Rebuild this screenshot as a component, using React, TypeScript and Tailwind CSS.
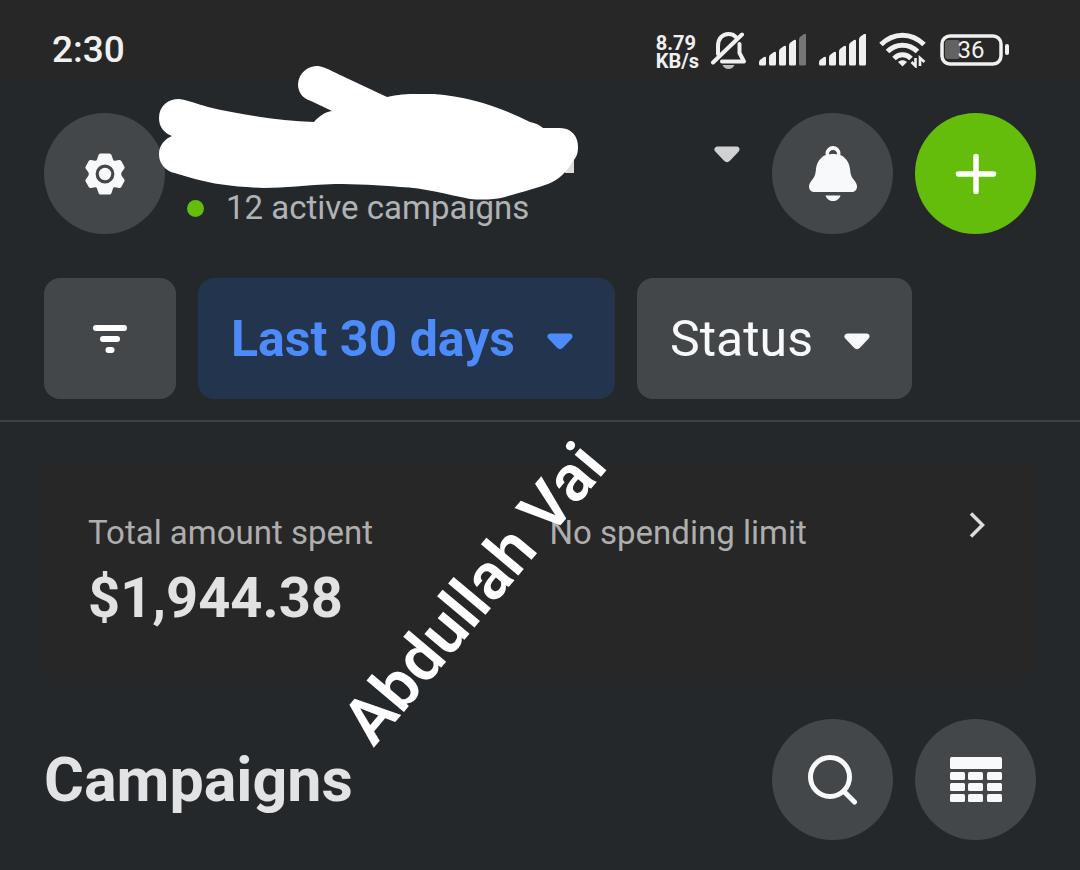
import type { ReactNode } from 'react';

function Caret() {
  return (
    <svg className="pointer-events-none mt-1 shrink-0" width="26" height="17" viewBox="0 0 26 17" fill="currentColor" stroke="currentColor" strokeWidth="6" strokeLinejoin="round" aria-hidden="true">
      <path d="M3.500 3.500h19L14 12.500q-1 1-2 0z" />
    </svg>
  );
}

function Signal({ weak = false }: { weak?: boolean }) {
  const bars = [
    { x: 0, h: 8 },
    { x: 10, h: 13 },
    { x: 20, h: 19 },
    { x: 30, h: 25 },
    { x: 40, h: 31 },
  ];
  return (
    <svg width="48" height="32" viewBox="0 0 48 32" aria-hidden="true">
      {bars.map((b, i) => (
        <path
          key={b.x}
          d={`M${b.x + 1.5} 31.500h4a1.500 1.500 0 0 0 1.500-1.500V${32 - b.h}q0-2-2-1l-3.500 2.500q-1.500 1-1.500 3V30a1.500 1.500 0 0 0 1.500 1.500z`}
          fill={weak && i === 4 ? '#767676' : '#f0f0f0'}
        />
      ))}
    </svg>
  );
}

function StatusBar() {
  return (
    <div className="flex h-20 items-center justify-between bg-[#272727] pt-5 pr-[71px] pl-[52px] text-[#f0f0f0]">
      <span className="text-[37px] font-medium">2:30</span>
      <div className="flex items-center gap-3">
        <div className="pt-1 text-[20px] leading-[18px] font-bold">
          <p>8.79</p>
          <p>KB/s</p>
        </div>
        <svg width="36" height="38" viewBox="0 0 36 38" fill="none" stroke="currentColor" strokeWidth="4" strokeLinecap="round" strokeLinejoin="round" aria-hidden="true">
          <path d="M7 23V15C7 7.500 11.500 3 17.500 3c3 0 5.500 1 7.200 2.800M28.500 13v9l4.500 8.500H11" />
          <path d="M31 3.500L2 31.500" />
          <path d="M11.500 34h12c-1.200 2.600-3.300 4-6 4s-4.800-1.400-6-4z" fill="#bdbdbd" stroke="none" />
        </svg>
        <Signal weak />
        <Signal />
        <svg width="48" height="36" viewBox="0 0 48 36" fill="none" stroke="currentColor" strokeWidth="5" aria-hidden="true">
          <path d="M2 12.500C14.500 0 32.500 0 45 12.500" />
          <path d="M8.500 19.500c8.500-8.500 21.500-8.500 30 0" />
          <path d="M15 26.500c5-5 12-5 17 0" />
          <path d="M23.500 34.500l-4.500-4.500c2.500-2.500 6.500-2.500 9 0z" fill="currentColor" stroke="none" />
          <path d="M36.500 26v8l-4-4M41 34v-8l4.500 4" strokeWidth="2.600" />
        </svg>
        <svg width="70" height="32" viewBox="0 0 70 32" aria-hidden="true">
          <rect x="6" y="6" width="15" height="19" rx="3" fill="#626262" />
          <rect x="3" y="2" width="59" height="28" rx="8" fill="none" stroke="#f0f0f0" strokeWidth="3.500" />
          <rect x="66" y="10" width="4" height="11" rx="2" fill="#f0f0f0" />
          <text x="32" y="24" textAnchor="middle" fontSize="24" fill="#f0f0f0">36</text>
        </svg>
      </div>
    </div>
  );
}

function RoundButton({ label, green = false, children }: { label: string; green?: boolean; children: ReactNode }) {
  return (
    <button
      aria-label={label}
      className={`flex size-[121px] shrink-0 items-center justify-center rounded-full text-[#f8f9fa] ${green ? 'bg-[#65bd0b]' : 'bg-[#444749]'}`}
    >
      {children}
    </button>
  );
}

function Scribble() {
  return (
    <svg className="pointer-events-none absolute top-[60px] left-[150px]" width="440" height="150" viewBox="150 60 440 150" aria-hidden="true">
      <path d="M565 155h9v18h-9z" fill="#dcdcdc" />
      <path
        fill="#fff"
        d="M159 118C159 106 168 99 179 99C187 100 198 104 208 107C242 115 280 121 314 122C319 116 325 112 332 111L311 101C302 98 298 92 298 84C299 73 307 66 318 66C325 67 332 71 338 74L387 97C402 93 418 94 434 94C470 97 500 107 530 122C535 123 540 125 543 128H560C572 128 578 137 578 147C578 154 576 158 573 161C564 176 555 182 545 185C530 190 515 194 505 197C494 200 480 200 470 199C445 194 425 188 400 187C380 185 355 184 335 184C305 185 285 188 264 188C235 187 213 184 195 179L171 172C163 168 159 162 159 154C159 145 165 139 172 136C164 133 159 127 159 118Z"
      />
    </svg>
  );
}

function Header() {
  return (
    <header className="flex px-11 pt-[33px]">
      <RoundButton label="Settings">
        <svg width="40" height="42" viewBox="0 0 40 42" aria-hidden="true">
          <path
            d="M15.500 0.500h9q1.500 0 2 1.500l1.500 4.500q.5 1.500 2 1.200l4-.7q1.500-.2 2.300 1l3 5.500q.8 1.300-.3 2.500l-2.200 3q-1.200 2 0 4l2.200 3q1 1.200.3 2.500l-3 5.500q-.8 1.200-2.300 1l-4-.7q-1.500-.3-2 1.200L26.500 40q-.5 1.500-2 1.500h-9q-1.500 0-2-1.500L12 35.500q-.5-1.500-2-1.200l-4 .7q-1.500.2-2.300-1l-3-5.500q-.8-1.300.3-2.500l2.200-3q1.200-2 0-4L1 16q-1-1.200-.3-2.500l3-5.500q.8-1.200 2.300-1l4 .7q1.500.3 2-1.200L13.500 2q.5-1.500 2-1.500z"
            fill="currentColor"
          />
          <circle cx="20" cy="21" r="7.800" fill="none" stroke="#444749" strokeWidth="3.200" />
        </svg>
      </RoundButton>
      <div className="flex flex-1 flex-col pl-[22px]">
        <button aria-label="Switch account" className="flex h-[78px] items-center justify-end pr-8 text-[#cfd1d2]">
          <Caret />
        </button>
        <p className="flex items-center gap-[22px] text-[33px] leading-[34px] text-[#b0b3b5]">
          <span className="size-[17px] rounded-full bg-[#65bd0b]" />
          12 active campaigns
        </p>
      </div>
      <div className="flex gap-[22px]">
        <RoundButton label="Notifications">
          <svg width="48" height="56" viewBox="0 0 48 56" aria-hidden="true">
            <circle cx="24" cy="7.500" r="5.500" fill="none" stroke="currentColor" strokeWidth="4" />
            <path d="M24 7.500C14 7.500 8 14 7 23c-.5 5-1 7.500-4 11-2 2.500-3 4.500-3 6.500 0 3.500 2 5.500 6 5.500h36c4 0 6-2 6-5.500 0-2-1-4-3-6.500-3-3.500-3.500-6-4-11-1-9-7-15.500-17-15.500z" fill="currentColor" />
            <path d="M20 8.500a4 4 0 0 1 8 0q-4-1.500-8 0z" fill="#444749" />
            <path d="M16.500 49.500h15c-1 3.500-4 5.500-7.500 5.500s-6.500-2-7.500-5.500z" fill="currentColor" />
          </svg>
        </RoundButton>
        <RoundButton label="Create campaign" green>
          <svg width="42" height="42" viewBox="0 0 42 42" stroke="#fff" strokeWidth="5.500" strokeLinecap="round" aria-hidden="true">
            <path d="M21 3.500v35M3.500 21h35" />
          </svg>
        </RoundButton>
      </div>
    </header>
  );
}

function Filters() {
  return (
    <div className="mt-11 flex gap-[22px] border-b-2 border-[#3e4245] px-11 pb-[21px]">
      <button aria-label="Filter" className="flex h-[121px] w-[132px] items-center justify-center rounded-2xl bg-[#444749]">
        <svg width="34" height="30" viewBox="0 0 34 30" fill="#fff" aria-hidden="true">
          <rect x="0" y="1" width="34" height="6" rx="3" />
          <rect x="7" y="12" width="20" height="6" rx="3" />
          <rect x="12.500" y="23" width="9" height="6" rx="3" />
        </svg>
      </button>
      <label className="flex h-[121px] w-[417px] items-center justify-between rounded-2xl bg-[#23344f] pt-0.5 pr-[42px] pl-[33px] text-[#4d8bfa]">
        <select aria-label="Date range" className="appearance-none text-[50px] font-bold outline-none">
          <option>Last 30 days</option>
        </select>
        <Caret />
      </label>
      <label className="flex h-[121px] w-[275px] items-center justify-between rounded-2xl bg-[#444749] pt-0.5 pr-[42px] pl-[33px] text-[#f8f9fa]">
        <select aria-label="Status" className="appearance-none text-[50px] outline-none">
          <option>Status</option>
        </select>
        <Caret />
      </label>
    </div>
  );
}

function SpendCard() {
  return (
    <section className="mx-11 mt-[42px] flex h-[211px] rounded bg-[#272727] pt-12 pr-[49px] pl-11">
      <div className="w-1/2">
        <p className="text-[33px] leading-[42px] text-[#aeaeae]">Total amount spent</p>
        <p className="mt-2 text-[56px] leading-[72px] font-bold text-[#e2e2e2]">$1,944.38</p>
      </div>
      <p className="flex-1 pl-3 text-[33px] leading-[42px] text-[#aeaeae]">No spending limit</p>
      <button aria-label="Spending details" className="h-6 text-[#dcdcdc]">
        <svg width="20" height="26" viewBox="0 0 20 26" fill="none" stroke="currentColor" strokeWidth="3.500" aria-hidden="true">
          <path d="M4 1.500L15.500 13 4 24.500" />
        </svg>
      </button>
    </section>
  );
}

function CampaignsHeader() {
  const cols = [0, 18, 37];
  const rows = [15, 26, 37];
  return (
    <section className="mt-11 flex items-center gap-[22px] px-11">
      <h1 className="flex-1 pt-0.5 text-[61px] font-bold text-[#e2e3e4]">Campaigns</h1>
      <RoundButton label="Search campaigns">
        <svg width="50" height="50" viewBox="0 0 50 50" fill="none" stroke="currentColor" aria-hidden="true">
          <circle cx="22" cy="22" r="19.500" strokeWidth="5" />
          <path d="M36.500 37L46.500 47" strokeWidth="5" strokeLinecap="round" />
        </svg>
      </RoundButton>
      <RoundButton label="Table columns">
        <svg width="52" height="46" viewBox="0 0 52 46" fill="currentColor" aria-hidden="true">
          <rect width="52" height="12" rx="1.500" />
          {rows.map((y) => cols.map((x) => <rect key={`${x}-${y}`} x={x} y={y} width="15" height="8" rx="1.500" />))}
        </svg>
      </RoundButton>
    </section>
  );
}

export default function App() {
  return (
    <main className="relative min-h-screen overflow-hidden bg-[#25282b] font-[Roboto,sans-serif]">
      <StatusBar />
      <Header />
      <Filters />
      <SpendCard />
      <CampaignsHeader />
      <Scribble />
      <p className="pointer-events-none absolute top-[690px] left-[382px] origin-bottom-left -rotate-50 text-[65px] leading-[65px] font-semibold whitespace-nowrap text-white">
        Abdullah Vai
      </p>
    </main>
  );
}
